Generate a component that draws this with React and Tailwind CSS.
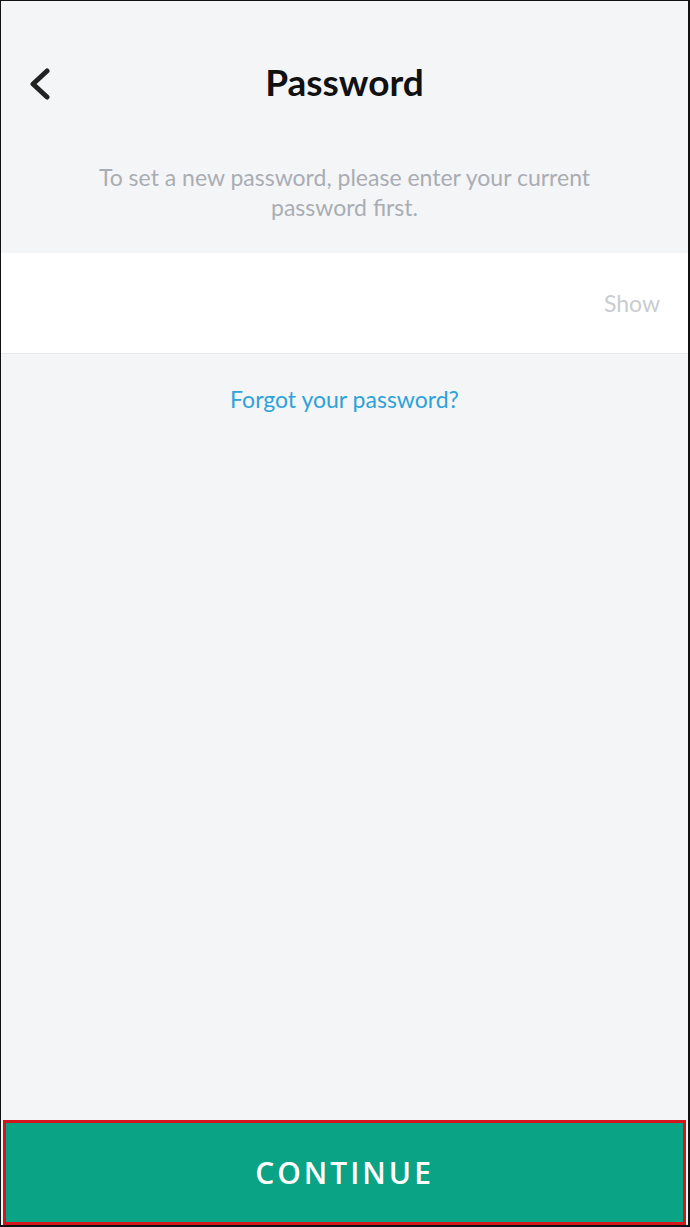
import React from "react";

export default function App() {
  return (
    <div className="w-[690px] h-[1227px] flex flex-col bg-[#f4f5f7] border-t border-l border-r-2 border-b-2 border-[#111] overflow-hidden" style={{ fontFamily: "Lato, 'Noto Sans', sans-serif" }}>
      <div className="relative h-[161px] flex-none">
        <svg className="absolute left-[26px] top-[67px]" width="26" height="32" viewBox="0 0 26 32" fill="none">
          <path d="M20 3 L6 16 L20 29" stroke="#222" strokeWidth="5" strokeLinecap="round" strokeLinejoin="round" />
        </svg>
        <div className="absolute left-0 right-0 top-[56px] text-center text-[37px] font-bold text-[#111] leading-[50px]">Password</div>
      </div>
      <div className="h-[91px] flex-none text-center text-[23px] leading-[30px] text-[#a9adb3] px-[80px]">
        To set a new password, please enter your current password first.
      </div>
      <div className="h-[101px] flex-none bg-white border-b border-[#e6e8eb] flex items-center justify-end pr-[28px]">
        <span className="text-[23px] text-[#c9ccd0]">Show</span>
      </div>
      <div className="pt-[30px] text-center text-[23px] leading-[30px] text-[#2ea2d9]">Forgot your password?</div>
      <div className="flex-1" />
      <div className="h-[105px] flex-none mx-[2px] border-[3px] border-[#d3161c] bg-[#0aa386] flex items-center justify-center">
        <span className="text-white text-[30px] tracking-[3px]" style={{ fontFamily: "'Open Sans', sans-serif", fontWeight: 600 }}>CONTINUE</span>
      </div>
    </div>
  );
}
